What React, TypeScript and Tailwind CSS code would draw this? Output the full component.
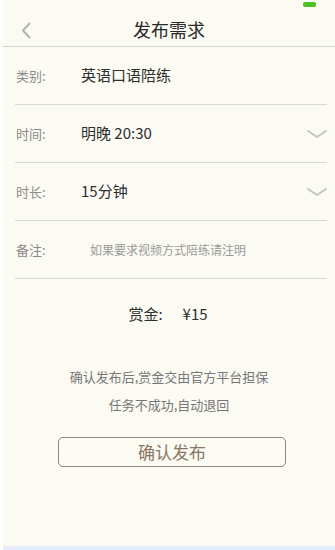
const font = { fontFamily: '"Noto Sans CJK SC", "Noto Sans", sans-serif' };

function ChevronDown() {
  return (
    <svg width="20" height="8" viewBox="0 0 20 8" fill="none">
      <path d="M1 1 L10 7 L19 1" stroke="#c4c4c4" strokeWidth="2" strokeLinecap="round" strokeLinejoin="round" />
    </svg>
  );
}

function Row({ label, value, arrow, muted }: { label: string; value: string; arrow?: boolean; muted?: boolean }) {
  return (
    <div className="ml-[12px] mr-[8px] flex h-[58px] items-center border-b border-[#d8d8d6]">
      <span className="w-[66px] shrink-0 pl-[1px] text-[13px] text-[#8a8a8a]">{label}</span>
      {muted ? (
        <span className="pl-[9px] text-[12px] text-[#9a9a9a]">{value}</span>
      ) : (
        <span className="text-[15px] text-[#2e2e2e]">{value}</span>
      )}
      {arrow && (
        <span className="ml-auto flex items-center">
          <ChevronDown />
        </span>
      )}
    </div>
  );
}

export default function App() {
  return (
    <div className="flex h-[550px] w-[335px] bg-white" style={font}>
      <div className="ml-[3px] flex flex-1 flex-col border-b-[4px] border-[#e6eefb] bg-[#fbfaf3]">
        <div className="relative flex h-[47px] items-center justify-center border-b border-[#d4d4d2]">
          <span className="absolute right-[19px] top-[2px] h-[5px] w-[13px] rounded-[2px] bg-[#4dc21e]" />
          <svg className="absolute left-[18px] top-[22px]" width="10" height="17" viewBox="0 0 10 17" fill="none">
            <path d="M8.5 1.5 L2 8.5 L8.5 15.5" stroke="#b4b4b4" strokeWidth="2" strokeLinecap="round" strokeLinejoin="round" />
          </svg>
          <h1 className="pt-[12px] text-[18px] text-[#2a2a2a]">发布需求</h1>
        </div>

        <Row label="类别:" value="英语口语陪练" />
        <Row label="时间:" value="明晚 20:30" arrow />
        <Row label="时长:" value="15分钟" arrow />
        <Row label="备注:" value="如果要求视频方式陪练请注明" muted />

        <div className="mt-[24px] flex items-center justify-center gap-[20px] pr-[2px] text-[15px] text-[#2e2e2e]">
          <span>赏金:</span>
          <span>¥15</span>
        </div>

        <div className="mt-[40px] flex flex-col items-center gap-[7px] text-[13px] leading-[21px] text-[#777]">
          <p>确认发布后,赏金交由官方平台担保</p>
          <p>任务不成功,自动退回</p>
        </div>

        <button className="mx-auto mt-[22px] flex h-[30px] w-[228px] translate-x-[3px] items-center justify-center rounded-[5px] border border-[#8c8782] text-[17px] text-[#8a7464]">
          确认发布
        </button>
      </div>
    </div>
  );
}
